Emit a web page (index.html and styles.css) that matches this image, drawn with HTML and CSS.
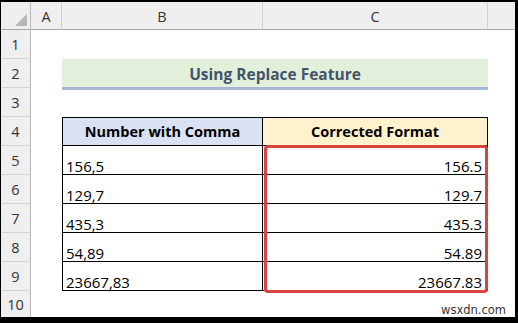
FILE: index.html
```html
<!DOCTYPE html>
<html>
<head>
<meta charset="utf-8">
<link rel="stylesheet" href="styles.css">
</head>
<body>
<div class="frame">
  <div class="sheet">
    <div class="corner"><span class="tri"></span></div>
    <div class="ch">A</div>
    <div class="ch">B</div>
    <div class="ch">C</div>
    <div class="ch ch-last"></div>

    <div class="rh">1</div><div class="c"></div><div class="c"></div><div class="c"></div><div class="c"></div>

    <div class="rh">2</div><div class="c"></div>
    <div class="title">Using Replace Feature</div>
    <div class="c"></div>

    <div class="rh">3</div><div class="c"></div><div class="c"></div><div class="c"></div><div class="c"></div>

    <div class="rh">4</div><div class="c"></div>
    <div class="th th-b top">Number with Comma</div>
    <div class="th th-c top">Corrected Format</div>
    <div class="c"></div>

    <div class="rh">5</div><div class="c"></div>
    <div class="td td-b">156,5</div>
    <div class="td td-c anchor">156.5<div class="highlight"></div></div>
    <div class="c"></div>

    <div class="rh">6</div><div class="c"></div>
    <div class="td td-b">129,7</div>
    <div class="td td-c">129.7</div>
    <div class="c"></div>

    <div class="rh">7</div><div class="c"></div>
    <div class="td td-b">435,3</div>
    <div class="td td-c">435.3</div>
    <div class="c"></div>

    <div class="rh">8</div><div class="c"></div>
    <div class="td td-b">54,89</div>
    <div class="td td-c">54.89</div>
    <div class="c"></div>

    <div class="rh">9</div><div class="c"></div>
    <div class="td td-b">23667,83</div>
    <div class="td td-c">23667.83</div>
    <div class="c"></div>

    <div class="rh rh-last">10</div><div class="c"></div><div class="c"></div>
    <div class="wm-cell"><span class="watermark">wsxdn.com</span></div>
  </div>
</div>
</body>
</html>
```

FILE: styles.css
```css
html, body {
  margin: 0;
  padding: 0;
  background: #000;
}

.frame {
  width: 518px;
  height: 323px;
  box-sizing: border-box;
  padding: 2px 3px 6px 1px;
  background: #000;
}

.sheet {
  display: grid;
  grid-template-columns: 30px 31px 201px 225px 27px;
  grid-template-rows: 28px repeat(9, 29px) 26px;
  background: #fff;
  font-family: "Open Sans", sans-serif;
  font-size: 15px;
  color: #000;
  overflow: hidden;
}

.sheet > div {
  box-sizing: border-box;
  min-width: 0;
}

.corner {
  background: #efefef;
  border-right: 1px solid #b8b8b8;
  border-bottom: 1px solid #a8a8a8;
  display: flex;
  justify-content: flex-end;
  align-items: flex-end;
  padding: 0 3px 3px 0;
}

.tri {
  width: 0;
  height: 0;
  border-left: 12px solid transparent;
  border-bottom: 12px solid #b5b5b5;
}

.ch {
  background: #efefef;
  border-right: 1px solid #d2d2d2;
  border-bottom: 1px solid #a8a8a8;
  display: flex;
  align-items: center;
  justify-content: center;
  color: #333;
  font-size: 14.5px;
  padding-top: 1px;
}

.ch-last {
  border-right: none;
}

.rh {
  background: #efefef;
  border-right: 1px solid #b8b8b8;
  border-bottom: 1px solid #d4d4d4;
  display: flex;
  align-items: center;
  justify-content: center;
  color: #333;
  font-size: 14.5px;
  padding-top: 1px;
}

.rh-last {
  border-bottom: none;
}

.c {
  background: #fff;
}

.title {
  grid-column: 3 / 5;
  background: #e2efda;
  border-bottom: 3px solid #a6b6d6;
  margin-bottom: -2px;
  display: flex;
  align-items: center;
  justify-content: center;
  font-weight: bold;
  font-size: 15.5px;
  color: #44546a;
  position: relative;
  z-index: 1;
  padding-top: 1px;
}

.th {
  display: flex;
  align-items: center;
  justify-content: center;
  font-weight: bold;
  font-size: 14.5px;
  border-bottom: 1px solid #000;
  border-right: 1px solid #000;
}

.top {
  border-top: 1px solid #000;
}

.th-b {
  background: #d9e1f2;
  border-left: 1px solid #000;
}

.th-c {
  background: #fff2cc;
}

.td {
  display: flex;
  align-items: flex-end;
  line-height: 16px;
  border-bottom: 1px solid #000;
  border-right: 1px solid #000;
  background: #fff;
}

.td-b {
  border-left: 1px solid #000;
  padding-left: 3px;
}

.td-c {
  justify-content: flex-end;
  padding-right: 5px;
}

.anchor {
  position: relative;
}

.highlight {
  position: absolute;
  top: -1px;
  left: 1px;
  right: -1px;
  height: 148px;
  box-sizing: border-box;
  border: 3px solid #d9443f;
  border-radius: 4px;
  pointer-events: none;
  z-index: 2;
}

.wm-cell {
  grid-column: 4 / 6;
  display: flex;
  justify-content: flex-end;
  align-items: flex-end;
  padding: 0 9px 0 0;
}

.watermark {
  font-family: "DejaVu Sans", sans-serif;
  font-size: 11.5px;
  line-height: 13px;
  color: #333;
}
```
